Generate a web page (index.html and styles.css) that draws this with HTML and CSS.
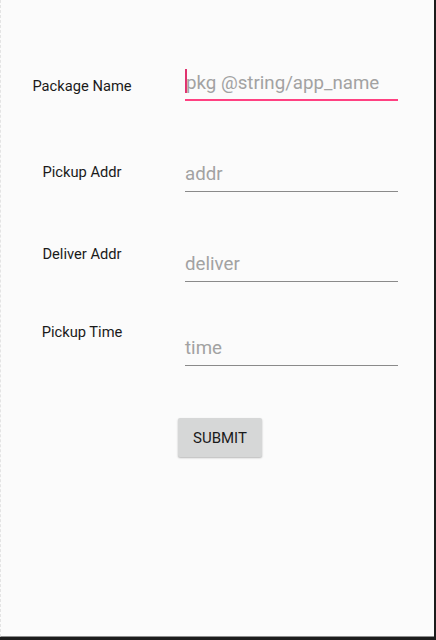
FILE: index.html
```html
<!DOCTYPE html>
<html>
<head>
<meta charset="utf-8">
<link rel="stylesheet" href="styles.css">
</head>
<body>
<div class="screen">
  <form class="form">
    <div class="row row-pkg">
      <div class="label">Package Name</div>
      <div class="field field-focused"><span class="cursor"></span><span class="hint">pkg @string/app_name</span></div>
    </div>
    <div class="row row-pickup">
      <div class="label">Pickup Addr</div>
      <div class="field"><span class="hint">addr</span></div>
    </div>
    <div class="row row-deliver">
      <div class="label">Deliver Addr</div>
      <div class="field"><span class="hint">deliver</span></div>
    </div>
    <div class="row row-time">
      <div class="label">Pickup Time</div>
      <div class="field"><span class="hint">time</span></div>
    </div>
    <div class="actions">
      <button type="button" class="submit">SUBMIT</button>
    </div>
  </form>
</div>
</body>
</html>
```

FILE: styles.css
```css
html, body {
  margin: 0;
  padding: 0;
  height: 640px;
  background: #1c1c1c;
  overflow: hidden;
}

.screen {
  box-sizing: border-box;
  width: 434px;
  height: 637px;
  background: #fbfbfb;
  border-bottom: 1px solid #8e8e8e;
  border-left: 1px dashed #e4e4e4;
  font-family: Roboto, "Noto Sans", sans-serif;
}

.form {
  display: flex;
  flex-direction: column;
  padding-top: 71px;
}

.row {
  display: grid;
  grid-template-columns: 162px 213px;
  column-gap: 22px;
  align-items: start;
}

.label {
  text-align: center;
  font-size: 14.7px;
  line-height: 20px;
  color: #1a1a1a;
}

.field {
  font-size: 18.7px;
  line-height: 24px;
  color: #a2a2a2;
  padding-bottom: 5px;
  border-bottom: 1px solid #8a8a8a;
  white-space: nowrap;
}

.field-focused {
  padding-bottom: 4px;
  border-bottom: 2px solid #ff4081;
}

.cursor {
  display: inline-block;
  width: 2px;
  height: 24px;
  margin-right: -1px;
  vertical-align: top;
  margin-top: -2px;
  background: #e0336f;
}

.row-pkg .label { margin-top: 5px; }

.row-pickup { margin-top: 61px; }

.row-deliver { margin-top: 52px; }
.row-deliver .field { margin-top: 8px; }

.row-time { margin-top: 40px; }
.row-time .field { margin-top: 14px; }

.actions {
  margin-top: 52px;
  padding-left: 177px;
}

.submit {
  width: 84px;
  height: 39px;
  border: none;
  border-radius: 2px;
  background: #d6d7d7;
  box-shadow: 0 1px 2px rgba(0, 0, 0, 0.28);
  font-family: Roboto, "Noto Sans", sans-serif;
  font-size: 15px;
  font-weight: 400;
  color: #1a1a1a;
  padding: 0;
}
```
